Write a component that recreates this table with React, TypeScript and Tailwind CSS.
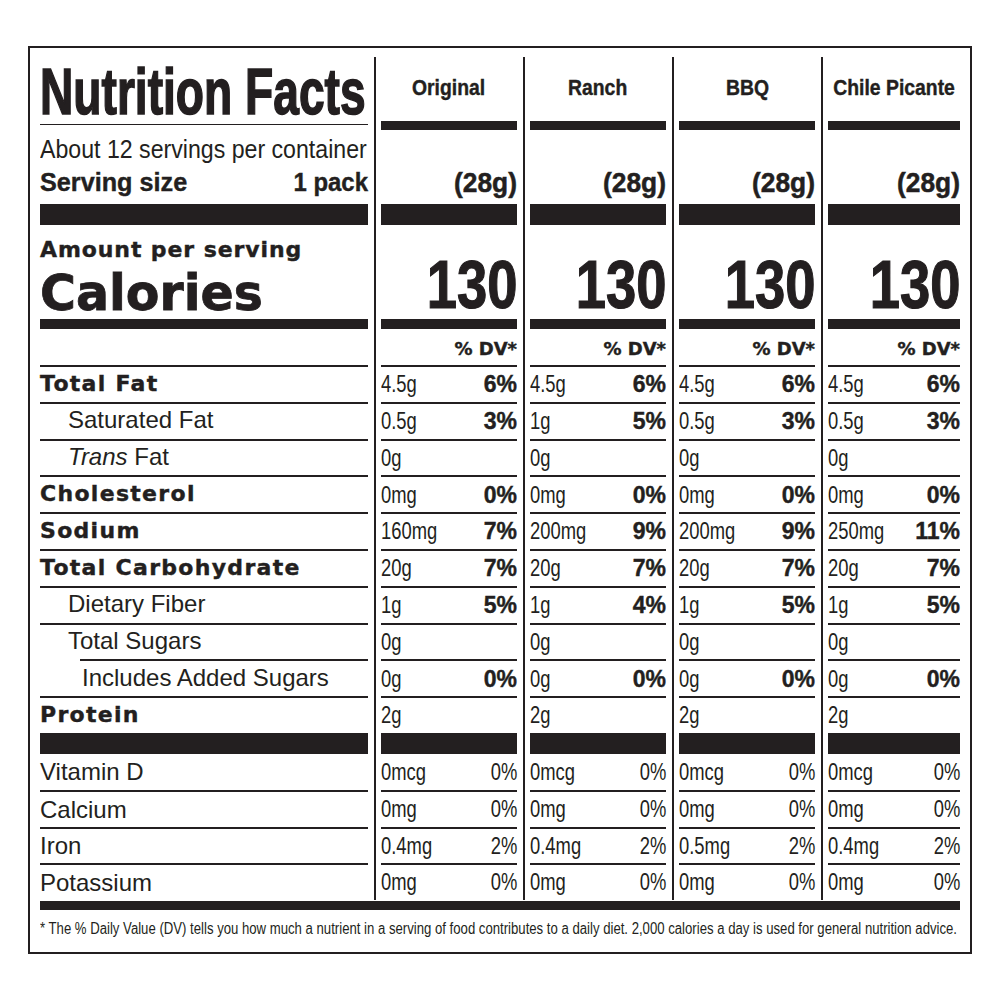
import React from 'react'

// nutrition panel, four flavours side by side

const INK = 'text-[#231f20]'
const SANS = "font-['Liberation_Sans',Arial,sans-serif]"
const BLACK = "font-['DejaVu_Sans',sans-serif] font-bold [-webkit-text-stroke:0.4px_#231f20]"

type Cell = [string, string]

type Row = {
  label: React.ReactNode
  kind: 'bold' | 'sub' | 'sub2'
  cells: Cell[]
}

const flavors = ['Original', 'Ranch', 'BBQ', 'Chile Picante']

const rows: Row[] = [
  { label: 'Total Fat', kind: 'bold', cells: [['4.5g', '6%'], ['4.5g', '6%'], ['4.5g', '6%'], ['4.5g', '6%']] },
  { label: 'Saturated Fat', kind: 'sub', cells: [['0.5g', '3%'], ['1g', '5%'], ['0.5g', '3%'], ['0.5g', '3%']] },
  {
    label: (
      <>
        <i>Trans</i> Fat
      </>
    ),
    kind: 'sub',
    cells: [['0g', ''], ['0g', ''], ['0g', ''], ['0g', '']],
  },
  { label: 'Cholesterol', kind: 'bold', cells: [['0mg', '0%'], ['0mg', '0%'], ['0mg', '0%'], ['0mg', '0%']] },
  { label: 'Sodium', kind: 'bold', cells: [['160mg', '7%'], ['200mg', '9%'], ['200mg', '9%'], ['250mg', '11%']] },
  { label: 'Total Carbohydrate', kind: 'bold', cells: [['20g', '7%'], ['20g', '7%'], ['20g', '7%'], ['20g', '7%']] },
  { label: 'Dietary Fiber', kind: 'sub', cells: [['1g', '5%'], ['1g', '4%'], ['1g', '5%'], ['1g', '5%']] },
  { label: 'Total Sugars', kind: 'sub', cells: [['0g', ''], ['0g', ''], ['0g', ''], ['0g', '']] },
  { label: 'Includes Added Sugars', kind: 'sub2', cells: [['0g', '0%'], ['0g', '0%'], ['0g', '0%'], ['0g', '0%']] },
  { label: 'Protein', kind: 'bold', cells: [['2g', ''], ['2g', ''], ['2g', ''], ['2g', '']] },
]

const vitamins: { label: string; cells: Cell[] }[] = [
  { label: 'Vitamin D', cells: [['0mcg', '0%'], ['0mcg', '0%'], ['0mcg', '0%'], ['0mcg', '0%']] },
  { label: 'Calcium', cells: [['0mg', '0%'], ['0mg', '0%'], ['0mg', '0%'], ['0mg', '0%']] },
  { label: 'Iron', cells: [['0.4mg', '2%'], ['0.4mg', '2%'], ['0.5mg', '2%'], ['0.4mg', '2%']] },
  { label: 'Potassium', cells: [['0mg', '0%'], ['0mg', '0%'], ['0mg', '0%'], ['0mg', '0%']] },
]

function Bar({ h }: { h: string }) {
  return <div className={`${h} bg-[#231f20]`} />
}

// condensed look: no narrow face installed, so squeeze the glyphs horizontally
function Sq({ className, children }: { className: string; children: React.ReactNode }) {
  return <span className={`inline-block whitespace-nowrap ${className}`}>{children}</span>
}

// ---------- left label column ----------

function LabelColumn() {
  return (
    <div className="w-[328px] mr-[6px] shrink-0 flex flex-col">
      <div className="h-[68px] border-b border-[#231f20] flex items-end">
        <h1 className={`${SANS} font-bold text-[65px] leading-none whitespace-nowrap`}>
          <Sq className="origin-left scale-x-[0.71] [-webkit-text-stroke:1.6px_#231f20]">Nutrition Facts</Sq>
        </h1>
      </div>
      <div className={`h-[79px] ${SANS} flex flex-col justify-center pt-[2px]`}>
        <p className="text-[26px] leading-[33px] whitespace-nowrap">
          <Sq className="origin-left scale-x-[0.89]">About 12 servings per container</Sq>
        </p>
        <p className="text-[26px] leading-[33px] font-bold flex justify-between [-webkit-text-stroke:0.4px_#231f20]">
          <Sq className="origin-left scale-x-[0.97]">Serving size</Sq>
          <Sq className="origin-right scale-x-[0.92]">1 pack</Sq>
        </p>
      </div>
      <Bar h="h-[21px]" />
      <div className={`h-[94px] ${BLACK} flex flex-col justify-end pb-[1px]`}>
        <p className="text-[22px] leading-none mb-[8px] tracking-[0.9px]">Amount per serving</p>
        <p className="text-[49px] leading-none [-webkit-text-stroke:0.8px_#231f20]">Calories</p>
      </div>
      <Bar h="h-[10px]" />
      <div className="h-[36px]" />
      {rows.map((r, i) => (
        <div key={i} className="h-[36.8px] relative flex items-center">
          <div
            className={`absolute top-0 right-0 h-[2px] bg-[#231f20] ${
              r.kind === 'sub2' ? 'left-[40px]' : 'left-0'
            }`}
          />
          <span
            className={
              r.kind === 'bold'
                ? `${BLACK} text-[22px] tracking-[1.3px]`
                : `${SANS} text-[24px] ${r.kind === 'sub2' ? 'pl-[42px]' : 'pl-[28px]'}`
            }
          >
            {r.label}
          </span>
        </div>
      ))}
      <Bar h="h-[21px]" />
      {vitamins.map((v, i) => (
        <div
          key={v.label}
          className={`h-[36.5px] flex items-center ${SANS} text-[24px] ${
            i > 0 ? 'border-t-2 border-[#231f20]' : ''
          }`}
        >
          {v.label}
        </div>
      ))}
    </div>
  )
}

// ---------- one flavour column ----------

function FlavorColumn({ idx, last }: { idx: number; last: boolean }) {
  return (
    <div
      className={`border-l-2 border-[#231f20] pl-[5px] flex flex-col ${
        last ? 'flex-1 min-w-0' : 'w-[149px] shrink-0 pr-[6px]'
      }`}
    >
      <div
        className={`h-[64px] flex items-center justify-center ${SANS} font-bold text-[22px] pb-[4px] [-webkit-text-stroke:0.4px_#231f20]`}
      >
        <Sq className="origin-center scale-x-[0.88]">{flavors[idx]}</Sq>
      </div>
      <Bar h="h-[9px]" />
      <div
        className={`h-[74px] flex items-end justify-end ${SANS} font-bold text-[28px] leading-none pb-[7px] [-webkit-text-stroke:0.5px_#231f20]`}
      >
        <Sq className="origin-right scale-x-[0.94]">(28g)</Sq>
      </div>
      <Bar h="h-[21px]" />
      <div
        className={`h-[94px] flex items-end justify-end ${SANS} font-bold text-[68px] leading-none pb-[1px] [-webkit-text-stroke:1.2px_#231f20]`}
      >
        <Sq className="origin-right scale-x-[0.8]">130</Sq>
      </div>
      <Bar h="h-[10px]" />
      <div className={`h-[36px] flex items-center justify-end pt-[3px] ${BLACK} text-[18px]`}>% DV*</div>
      {rows.map((r, i) => (
        <div
          key={i}
          className="h-[36.8px] border-t-2 border-[#231f20] flex items-center justify-between"
        >
          <Sq className={`${SANS} text-[23px] origin-left scale-x-[0.8]`}>{r.cells[idx][0]}</Sq>
          <span className={`${SANS} font-bold text-[23px] [-webkit-text-stroke:0.4px_#231f20]`}>
            {r.cells[idx][1]}
          </span>
        </div>
      ))}
      <Bar h="h-[21px]" />
      {vitamins.map((v, i) => (
        <div
          key={v.label}
          className={`h-[36.5px] flex items-center justify-between ${SANS} text-[23px] ${
            i > 0 ? 'border-t-2 border-[#231f20]' : ''
          }`}
        >
          <Sq className="origin-left scale-x-[0.8]">{v.cells[idx][0]}</Sq>
          <Sq className="origin-right scale-x-[0.8]">{v.cells[idx][1]}</Sq>
        </div>
      ))}
    </div>
  )
}

export default function App() {
  return (
    <div className={`w-[1000px] h-[1000px] bg-white ${INK} pt-[46px] pl-[28px]`}>
      <div className="w-[944px] h-[908px] border-2 border-[#231f20] pt-[9px] px-[10px] flex flex-col">
        <div className="flex">
          <LabelColumn />
          {flavors.map((_, i) => (
            <FlavorColumn key={i} idx={i} last={i === flavors.length - 1} />
          ))}
        </div>
        <div className="mt-[1px] h-[9px] bg-[#231f20]" />
        <p className={`h-[38px] flex items-center overflow-hidden ${SANS} text-[16px]`}>
          <Sq className="origin-left scale-x-[0.822]">
            * The % Daily Value (DV) tells you how much a nutrient in a serving of food contributes to a
            daily diet. 2,000 calories a day is used for general nutrition advice.
          </Sq>
        </p>
      </div>
    </div>
  )
}
